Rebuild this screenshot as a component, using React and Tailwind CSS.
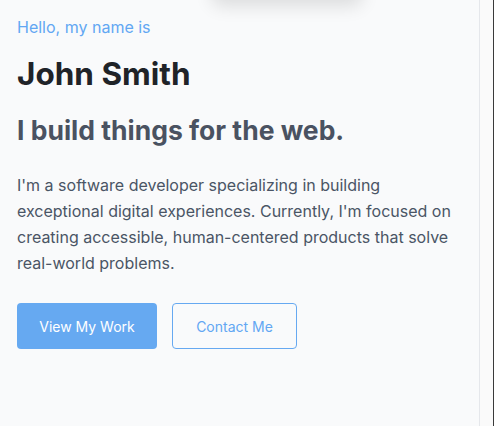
import React from 'react';

function Hero() {
  return (
    <section className="relative flex-1 overflow-hidden bg-gray-50 border-r border-gray-200">
      {/* floating card peeking from the top */}
      <div className="absolute left-[212px] top-[-60px] w-[150px] h-[60px] rounded-lg bg-gray-50 shadow-[0_6px_18px_rgba(0,0,0,0.12)]" />

      <div className="pl-[17px] pr-4 pt-[17px]">
        <p className="text-[16px] leading-[20px] text-[#62a7f3]">Hello, my name is</p>
        <h1 className="mt-[19px] text-[31.5px] leading-[36px] font-bold text-[#1f2328]">John Smith</h1>
        <h2 className="mt-[22px] text-[26.5px] leading-[32px] font-bold text-[#4a5261]">I build things for the web.</h2>
        <p className="mt-[26px] max-w-[448px] text-[16px] leading-[26px] text-gray-600">
          I'm a software developer specializing in building exceptional digital experiences. Currently, I'm focused on creating accessible, human-centered products that solve real-world problems.
        </p>
        <div className="mt-[27px] flex gap-[15px]">
          <button className="h-[46px] w-[140px] rounded bg-[#66a9f1] text-[14px] text-white">View My Work</button>
          <button className="h-[46px] w-[125px] rounded border border-[#66a9f1] text-[14px] text-[#62a7f3]">Contact Me</button>
        </div>
      </div>
    </section>
  );
}

export default function App() {
  return (
    <div className="flex h-[426px] w-[494px] font-['Inter',sans-serif]">
      <Hero />
      <div className="w-[14px] bg-[#fafafa] border-r border-[#3a3a3a]" />
    </div>
  );
}
